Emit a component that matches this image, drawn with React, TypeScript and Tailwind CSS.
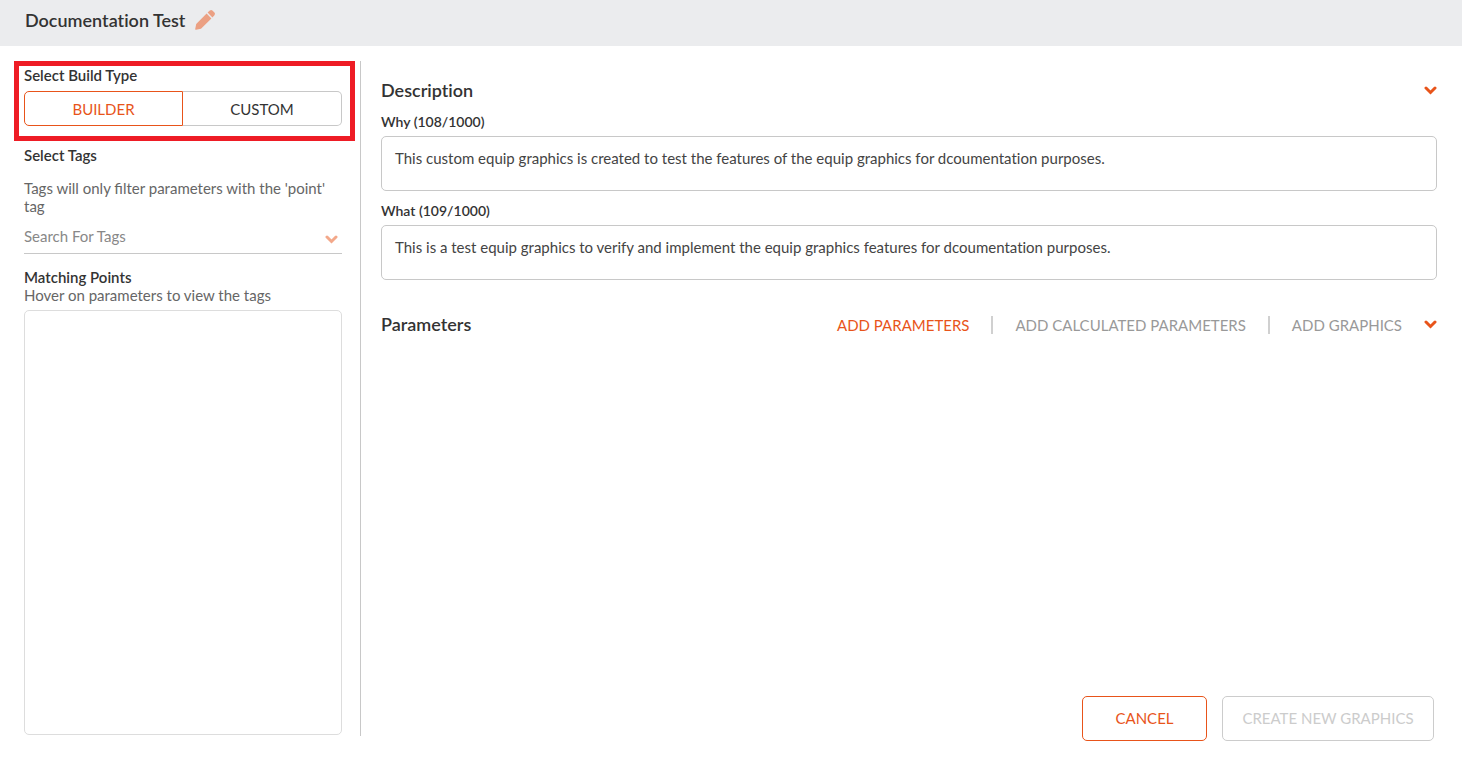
import React, { useState } from 'react';

const PencilIcon: React.FC = () => (
  <svg viewBox="0 0 20 20" className="w-5 h-5" fill="currentColor" aria-hidden="true">
    <path d="M11.6 3.6 16.4 8.4 6 18.8 1 19.8Q0 20 0.2 19L1.2 14Z" />
    <path d="M12.6 2.6 14.8 0.6Q16.2 -0.5 17.4 0.6L19.4 2.6Q20.5 3.8 19.4 5.2L17.4 7.4Z" />
  </svg>
);

const ChevronIcon: React.FC = () => (
  <svg viewBox="0 0 13 9" className="w-[13px] h-[9px]" fill="none" aria-hidden="true">
    <path d="M2 2 6.5 6.5 11 2" stroke="currentColor" strokeWidth="3" strokeLinecap="round" />
  </svg>
);

const DescriptionField: React.FC<{ id: string; label: string; count: number; value: string }> = ({
  id,
  label,
  count,
  value,
}) => {
  const [text, setText] = useState(value);

  return (
    <div className="flex flex-col">
      <label htmlFor={id} className="text-sm leading-5 font-semibold mb-1">
        {label} ({count}/1000)
      </label>
      <textarea
        id={id}
        value={text}
        maxLength={1000}
        onChange={(e) => setText(e.target.value)}
        className="w-full h-[55px] px-[13px] py-[11px] text-[15px] leading-5 text-[#444444] border border-[#c8c8c8] rounded-[5px] resize-none outline-none"
      />
    </div>
  );
};

const Sidebar: React.FC = () => {
  const [buildType, setBuildType] = useState('BUILDER');

  return (
    <aside className="w-[361px] shrink-0 flex flex-col border-r border-[#c8c8c8] text-[15px] leading-[18px]">
      {/* Build type */}
      <div className="ml-3.5 mr-[5px] border-[5px] border-[#ee1c25] pl-[5px] pr-2 pb-2.5">
        <h2 className="font-semibold mb-[7px]">Select Build Type</h2>
        <div className="grid grid-cols-2 h-[35px]">
          {['BUILDER', 'CUSTOM'].map((type, index) => (
            <button
              key={type}
              type="button"
              aria-pressed={buildType === type}
              onClick={() => setBuildType(type)}
              className={`border ${index === 0 ? 'rounded-l-[5px]' : 'rounded-r-[5px]'} ${
                buildType === type
                  ? 'border-[#e8541a] text-[#e8541a]'
                  : `border-[#c8c8c8] ${index === 0 ? 'border-r-0' : 'border-l-0'}`
              }`}
            >
              {type}
            </button>
          ))}
        </div>
      </div>

      {/* Tags */}
      <div className="flex-1 flex flex-col pl-6 pr-[18px] pt-[5px]">
        <label htmlFor="tags" className="font-semibold">Select Tags</label>
        <p className="mt-[15px] text-[#666666] [font-variant-ligatures:normal]">
          Tags will only filter parameters with the 'point' tag
        </p>
        <div className="mt-[11px] h-7 flex items-center border-b border-[#c8c8c8]">
          <input
            id="tags"
            type="text"
            placeholder="Search For Tags"
            className="flex-1 min-w-0 h-5 mb-2 outline-none placeholder:text-[#888888]"
          />
          <button type="button" aria-label="Show tags" className="mr-1 text-[#f3a88a]">
            <ChevronIcon />
          </button>
        </div>

        {/* Matching points */}
        <h2 className="mt-3.5 font-semibold">Matching Points</h2>
        <p className="text-[#666666]">Hover on parameters to view the tags</p>
        <div className="flex-1 mt-1.5 mb-px border border-[#dddddd] rounded-[5px]" />
      </div>
    </aside>
  );
};

export default function App() {
  return (
    <div className="min-h-screen flex flex-col bg-white text-[#333333] font-['Lato',sans-serif] [font-variant-ligatures:none]">
      <header className="h-[46px] shrink-0 flex items-center gap-2.5 px-[25px] pb-[7px] bg-[#ebecee]">
        <h1 className="text-lg font-semibold">Documentation Test</h1>
        <button type="button" aria-label="Edit name" className="text-[#eba083]">
          <PencilIcon />
        </button>
      </header>

      <div className="flex-1 flex pt-[15px]">
        <div className="flex mb-[33px]">
          <Sidebar />
        </div>

        <main className="flex-1 min-w-0 flex flex-col pl-5 pr-[25px] pb-7">
          {/* Description */}
          <section>
            <div className="flex items-center justify-between pt-[17px] mb-[9px]">
              <h2 className="text-lg leading-[25px] font-semibold">Description</h2>
              <button type="button" aria-label="Toggle description" className="text-[#e8541a]">
                <ChevronIcon />
              </button>
            </div>
            <div className="flex flex-col gap-2.5">
              <DescriptionField
                id="why"
                label="Why"
                count={108}
                value="This custom equip graphics is created to test the features of the equip graphics for dcoumentation purposes."
              />
              <DescriptionField
                id="what"
                label="What"
                count={109}
                value="This is a test equip graphics to verify and implement the equip graphics features for dcoumentation purposes."
              />
            </div>
          </section>

          {/* Parameters */}
          <section className="mt-8 flex items-center justify-between">
            <h2 className="text-lg leading-[25px] font-semibold">Parameters</h2>
            <div className="flex items-center text-[15px] leading-5 text-[#999999]">
              <button type="button" className="text-[#e8541a]">ADD PARAMETERS</button>
              <span className="w-0.5 h-[18px] mx-[22px] bg-[#d0d0d0]" />
              <button type="button">ADD CALCULATED PARAMETERS</button>
              <span className="w-0.5 h-[18px] mx-[22px] bg-[#d0d0d0]" />
              <button type="button">ADD GRAPHICS</button>
              <button type="button" aria-label="Toggle parameters" className="ml-[22px] text-[#e8541a]">
                <ChevronIcon />
              </button>
            </div>
          </section>

          {/* Actions */}
          <div className="mt-auto mr-[3px] flex justify-end gap-[15px] text-[15px]">
            <button type="button" className="w-[125px] h-[45px] border border-[#e8541a] rounded-[5px] text-[#e8541a]">
              CANCEL
            </button>
            <button type="button" disabled className="w-[212px] h-[45px] border border-[#cccccc] rounded-[5px] text-[#cccccc]">
              CREATE NEW GRAPHICS
            </button>
          </div>
        </main>
      </div>
    </div>
  );
}
